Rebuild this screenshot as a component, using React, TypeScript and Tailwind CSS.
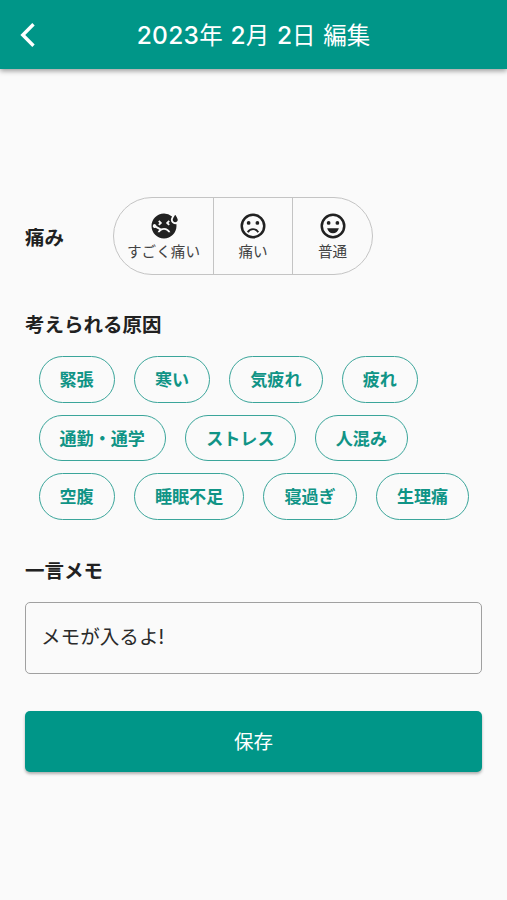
import { useState } from "react";
import { MdSick } from "react-icons/md";

function SadFace({ size }: { size: number }) {
  return (
    <svg width={size} height={size} viewBox="0 0 24 24" fill="none">
      <circle cx="12" cy="12" r="9" stroke="currentColor" strokeWidth="2" />
      <circle cx="8.5" cy="9.5" r="1.5" fill="currentColor" />
      <circle cx="15.5" cy="9.5" r="1.5" fill="currentColor" />
      <path
        d="M7.8 17c.8-1.5 2.3-2.5 4.2-2.5s3.4 1 4.2 2.5"
        stroke="currentColor"
        strokeWidth="1.5"
      />
    </svg>
  );
}

function HappyFace({ size }: { size: number }) {
  return (
    <svg width={size} height={size} viewBox="0 0 24 24" fill="none">
      <circle cx="12" cy="12" r="9" stroke="currentColor" strokeWidth="2" />
      <circle cx="8.5" cy="9.5" r="1.5" fill="currentColor" />
      <circle cx="15.5" cy="9.5" r="1.5" fill="currentColor" />
      <path
        d="M7.300 13.800h9.400c-.6 2.400-2.500 4-4.700 4s-4.100-1.600-4.700-4z"
        fill="currentColor"
      />
    </svg>
  );
}

const painLevels = [
  { label: "すごく痛い", icon: MdSick, width: "w-[100px]" },
  { label: "痛い", icon: SadFace, width: "w-[79px]" },
  { label: "普通", icon: HappyFace, width: "w-[79px]" },
];

const causeRows = [
  ["緊張", "寒い", "気疲れ", "疲れ"],
  ["通勤・通学", "ストレス", "人混み"],
  ["空腹", "睡眠不足", "寝過ぎ", "生理痛"],
];

export default function App() {
  const [memo, setMemo] = useState("メモが入るよ!");

  return (
    <main className="h-[900px] w-[507px] overflow-hidden bg-[#fafafa] font-['Inter','Noto_Sans_CJK_JP',sans-serif] text-[#212121]">
      <header className="grid h-[69px] grid-cols-[56px_1fr_56px] items-center bg-[#009688] text-white shadow-[0_2px_5px_rgba(0,0,0,0.38)]">
        <button type="button" className="flex h-full items-center pl-[20px]">
          <svg
            width="16"
            height="26"
            viewBox="0 0 16 26"
            fill="none"
            stroke="currentColor"
            strokeWidth="3.4"
          >
            <path d="M13.5 2.3 2.8 13l10.7 10.7" />
          </svg>
        </button>
        <h1 className="pt-[2px] text-center text-[23.5px] leading-8 whitespace-nowrap [word-spacing:1.2px]">
          <span className="text-[24.5px] font-medium tracking-[0.3px]">
            2023
          </span>
          年{" "}
          <span className="text-[24.5px] font-medium">2</span>月{" "}
          <span className="text-[24.5px] font-medium">2</span>日 編集
        </h1>
      </header>

      <div className="px-[25px] pt-[128px]">
        <div className="flex h-[78px] items-center">
          <h2 className="w-[88px] pt-[3px] text-[19.5px] leading-7 font-bold">
            痛み
          </h2>
          <div className="flex h-[78px] divide-x divide-[#c4c4c4] overflow-hidden rounded-full border border-[#c4c4c4]">
            {painLevels.map(({ label, icon: Icon, width }) => (
              <button
                key={label}
                type="button"
                className={`flex flex-col items-center pt-[13px] ${width}`}
              >
                <Icon size={30} />
                <span className="mt-px text-[14.6px] leading-5 whitespace-nowrap text-[#424242]">
                  {label}
                </span>
              </button>
            ))}
          </div>
        </div>

        <h2 className="mt-[36px] text-[19.5px] leading-7 font-bold">
          考えられる原因
        </h2>
        <div className="mt-[17px] flex flex-col gap-[12px] pl-[13.5px]">
          {causeRows.map((row) => (
            <div key={row[0]} className="flex gap-[19.2px]">
              {row.map((cause) => (
                <button
                  key={cause}
                  type="button"
                  className="h-[46.7px] rounded-full border border-[#3aa59a] px-[20px] pt-px text-[17.1px] leading-6 font-bold whitespace-nowrap text-[#109486]"
                >
                  {cause}
                </button>
              ))}
            </div>
          ))}
        </div>

        <h2 className="mt-[37px] text-[19.5px] leading-7 font-bold">
          一言メモ
        </h2>
        <input
          value={memo}
          onChange={(e: React.ChangeEvent<HTMLInputElement>) =>
            setMemo(e.target.value)
          }
          className="mt-[17px] block h-[72px] w-full rounded-[5px] border border-[#a0a0a0] px-[15px] pb-[5px] text-[19.6px] text-[#2b2b2b] outline-none"
        />

        <button
          type="button"
          className="mt-[37px] h-[61px] w-full rounded-[5px] bg-[#009688] pt-[2px] text-[19.5px] text-white shadow-[0_2px_3px_rgba(0,0,0,0.3)]"
        >
          保存
        </button>
      </div>
    </main>
  );
}
